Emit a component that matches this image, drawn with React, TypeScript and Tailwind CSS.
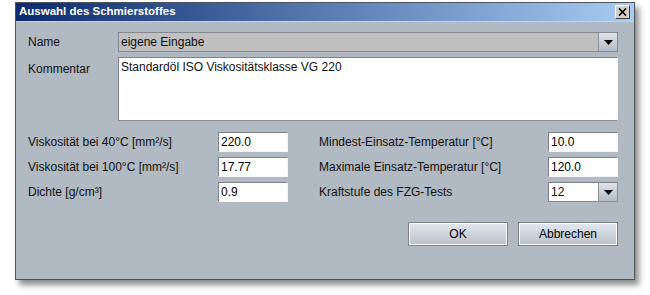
import React from 'react';

const font = { fontFamily: '"Liberation Sans", Arial, sans-serif' };

const Field = ({ value, className = '' }: { value: string; className?: string }) => (
  <div
    className={`h-[20px] bg-white border border-t-[#7d828a] border-l-[#7d828a] border-b-[#f4f6f8] border-r-[#f4f6f8] pl-[2px] text-[12px] leading-[18px] text-black ${className}`}
  >
    {value}
  </div>
);

const ArrowButton = () => (
  <div className="w-[19px] h-full flex items-center justify-center bg-gradient-to-b from-[#dfe4ea] to-[#b4bcc6] border-l border-[#8c9198]">
    <svg width="9" height="5" viewBox="0 0 9 5">
      <path d="M0 0h9L4.5 5z" fill="#000" />
    </svg>
  </div>
);

const Button = ({ label }: { label: string }) => (
  <button className="w-[100px] h-[24px] border border-[#7b8089] shadow-[inset_-1px_-1px_0_#ffffff,inset_1px_1px_0_#ffffff] bg-gradient-to-b from-[#e3e8ee] to-[#b9c1cb] text-[12px] text-black">
    {label}
  </button>
);

export default function App() {
  return (
    <div className="w-[650px] h-[295px] bg-white pt-[2px] pl-[15px]" style={font}>
      <div className="w-[620px] h-[278px] flex flex-col bg-[#b1b9c3] border border-[#4f545a] shadow-[4px_5px_6px_rgba(0,0,0,0.45)]">
        {/* title bar */}
        <div className="h-[19px] flex items-center justify-between bg-gradient-to-r from-[#0c2a6e] via-[#5a7bb2] to-[#a8ccf2] pl-[3px] pr-[4px] border-b border-[#c9d0d8]">
          <span className="text-white font-bold text-[11.5px] leading-none">Auswahl des Schmierstoffes</span>
          <div className="w-[15px] h-[14px] flex items-center justify-center bg-[#d4d0c8] border border-t-white border-l-white border-b-[#404040] border-r-[#404040]">
            <svg width="9" height="8" viewBox="0 0 9 8">
              <path d="M1 0.5l7 7M8 0.5l-7 7" stroke="#000" strokeWidth="1.6" />
            </svg>
          </div>
        </div>

        <div className="flex flex-col pl-[12px] pr-[16px] pt-[10px] text-[12px] text-[#111]">
          <div className="flex items-center h-[20px]">
            <span className="w-[90px]">Name</span>
            <div className="flex-1 h-[20px] flex border border-[#85898f] bg-[#c0c0c0]">
              <span className="flex-1 pl-[2px] leading-[18px]">eigene Eingabe</span>
              <ArrowButton />
            </div>
          </div>

          <div className="flex mt-[5px] h-[64px]">
            <span className="w-[90px] pt-[3px]">Kommentar</span>
            <div className="flex-1 bg-white border border-t-[#7d828a] border-l-[#7d828a] border-b-[#8a8f96] border-r-[#f4f6f8] pl-[2px] pt-[2px] leading-[14px]">
              Standardöl ISO Viskositätsklasse VG 220
            </div>
          </div>

          <div className="grid grid-cols-[190px_70px_31px_229px_70px] gap-y-[5px] mt-[11px] items-center">
            <span>Viskosität bei 40°C [mm²/s]</span>
            <Field value="220.0" />
            <span />
            <span>Mindest-Einsatz-Temperatur [°C]</span>
            <Field value="10.0" />

            <span>Viskosität bei 100°C [mm²/s]</span>
            <Field value="17.77" />
            <span />
            <span>Maximale Einsatz-Temperatur [°C]</span>
            <Field value="120.0" />

            <span>Dichte [g/cm³]</span>
            <Field value="0.9" />
            <span />
            <span>Kraftstufe des FZG-Tests</span>
            <div className="h-[20px] flex bg-white border border-t-[#7d828a] border-l-[#7d828a] border-b-[#8a8f96] border-r-[#8a8f96]">
              <span className="flex-1 pl-[2px] leading-[18px]">12</span>
              <ArrowButton />
            </div>
          </div>

          <div className="flex justify-end gap-[10px] mt-[20px]">
            <Button label="OK" />
            <Button label="Abbrechen" />
          </div>
        </div>
      </div>
    </div>
  );
}
